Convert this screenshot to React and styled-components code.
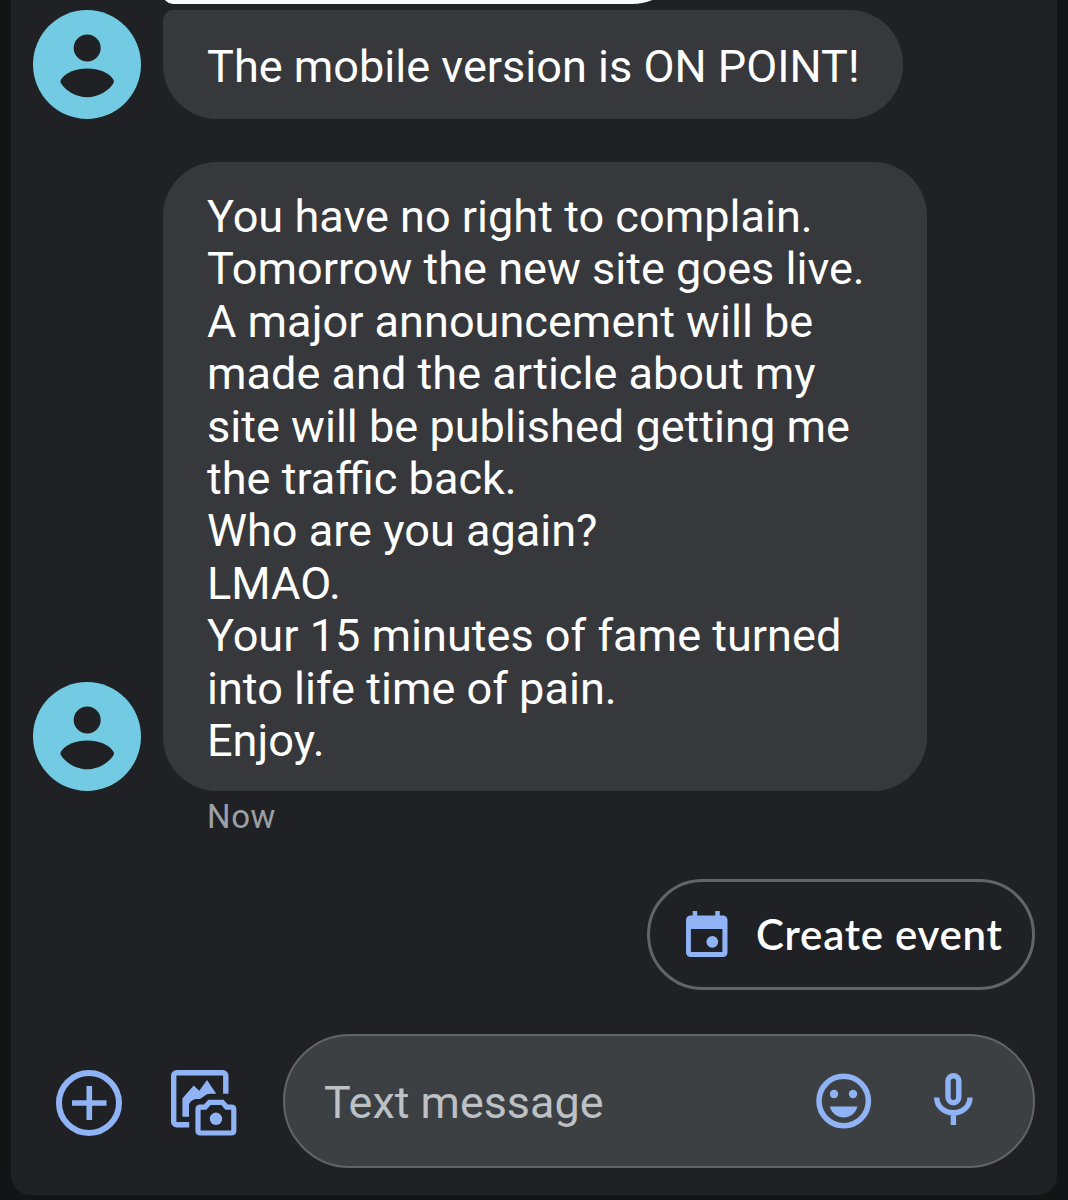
import React from 'react'
import styled, { createGlobalStyle } from 'styled-components'

const GlobalStyle = createGlobalStyle`
  * {
    box-sizing: border-box;
  }
  body {
    margin: 0;
    background: #131416;
    font-family: Roboto, 'Liberation Sans', sans-serif;
  }
`

const Screen = styled.div`
  height: 1200px;
  padding: 0 11px 5px;
  overflow: hidden;
  background: #131416;
`

const Panel = styled.main`
  display: flex;
  flex-direction: column;
  height: 1195px;
  padding: 0 22px;
  background: #202124;
  border-radius: 0 0 20px 20px;
`

const PreviousBubble = styled.div`
  flex: none;
  width: 523px;
  height: 4px;
  margin: 0 0 6px 130px;
  overflow: hidden;

  &::before {
    content: '';
    display: block;
    height: 109px;
    margin-top: -105px;
    background: #f8f9fa;
    border-radius: 54px 54px 54px 10px;
  }
`

const MessageRow = styled.div`
  display: flex;
  align-items: flex-end;
  gap: 22px;
  margin-bottom: ${(props) => props.$gap || 0}px;
`

const Bubble = styled.div`
  width: ${(props) => props.$width}px;
  height: ${(props) => props.$height}px;
  padding: ${(props) => props.$padTop}px 0 0 44px;
  background: #37383c;
  border-radius: ${(props) => (props.$grouped ? '10px 54px 54px 54px' : '54px')};
  color: #fff;
`

const Line = styled.p`
  margin: 0;
  font-size: 45.08px;
  line-height: 52.4px;
  white-space: nowrap;
`

const Timestamp = styled.div`
  height: 40px;
  margin: 5px 0 43px 174px;
  color: #9aa0a6;
  font-size: 33px;
  line-height: 41px;
  letter-spacing: 0.6px;
`

const SuggestionButton = styled.button`
  display: flex;
  align-items: center;
  align-self: flex-end;
  width: 388px;
  height: 111px;
  padding: 0 0 2px 36px;
  background: transparent;
  border: 3px solid #636466;
  border-radius: 56px;
  color: #fff;
`

const SuggestionLabel = styled.span`
  margin-left: 28px;
  font-family: Lato, sans-serif;
  font-size: 42px;
  font-weight: 600;
  line-height: 50px;
  letter-spacing: 0.75px;
  white-space: nowrap;
`

const ComposeBar = styled.div`
  display: flex;
  align-items: center;
  height: 134px;
  margin-top: 44px;
  padding-left: 23px;
`

const IconButton = styled.button`
  display: flex;
  flex: none;
  margin: ${(props) => props.$margin || 0};
  padding: 0;
  background: none;
  border: 0;
`

const MessageField = styled.div`
  display: flex;
  align-items: center;
  width: 752px;
  height: 134px;
  margin-left: 46px;
  padding-left: 39px;
  background: #3c4043;
  border: 2px solid #636466;
  border-radius: 67px;
`

const Placeholder = styled.span`
  flex: none;
  width: 492px;
  margin-top: 4px;
  color: #bdc1c6;
  font-size: 44.9px;
  line-height: 54px;
`

const Icon = styled.svg`
  display: block;
  flex: none;
`

const BLUE = '#8fb3f5'

const Avatar = () => (
  <Icon width="108" height="109" viewBox="0 0 108 109">
    <ellipse cx="54" cy="54.5" rx="54" ry="54.5" fill="#72cae3" />
    <circle cx="54.2" cy="38" r="13.5" fill="#202124" />
    <path
      d="M27.8 70C31.500 63 43 58.600 54.200 58.600S77 63 80.600 70Q81.300 71.500 80.600 73C76 80.500 65.500 87.300 54.200 87.300S32.400 80.500 27.800 73Q27.100 71.500 27.800 70Z"
      fill="#202124"
    />
  </Icon>
)

const CalendarIcon = () => (
  <Icon width="42" height="46" viewBox="0 0 42 46">
    <path
      fill={BLUE}
      fillRule="evenodd"
      d="M6.700 0h4.500v4.500h18.100V0h4.500v4.500h3.200A4.500 4.500 0 0 1 41.500 9v32.500A4.500 4.500 0 0 1 37 46H4.500A4.500 4.500 0 0 1 0 41.500V9A4.500 4.500 0 0 1 4.500 4.500H6.700ZM4.900 18v22.900h31.500V18Z"
    />
    <circle cx="26.300" cy="30.800" r="5.900" fill={BLUE} />
  </Icon>
)

const PlusIcon = () => (
  <Icon width="66" height="66" viewBox="0 0 66 66" fill="none" stroke={BLUE}>
    <circle cx="33" cy="33" r="30" strokeWidth="6" />
    <path d="M33.300 16v34M16 33h34.500" strokeWidth="5.600" />
  </Icon>
)

const GalleryIcon = () => (
  <Icon width="66" height="66" viewBox="0 0 66 66">
    <path
      d="M18.200 54.700H5.700a3 3 0 0 1-3-3V5.700a3 3 0 0 1 3-3H51.800a3 3 0 0 1 3 3V23.800"
      fill="none"
      stroke={BLUE}
      strokeWidth="5.400"
    />
    <path
      d="M11.400 46.700V28.500L22.700 15.500 28.300 20.700 36 10 45.200 23.800H39C34.500 23.800 32.500 27.500 28.800 29H25C20.500 29.800 18 32.500 18 36.500V46.700Z"
      fill={BLUE}
    />
    <path
      d="M29.500 37.100H34.200L38.500 32.300H51.300L55.600 37.100H60.300Q62.800 37.100 62.800 39.600V60.500Q62.800 63 60.300 63H29.500Q27 63 27 60.500V39.600Q27 37.100 29.500 37.100Z"
      fill="none"
      stroke={BLUE}
      strokeWidth="5.200"
    />
    <circle cx="45" cy="48.800" r="6.200" fill={BLUE} />
  </Icon>
)

const SmileIcon = () => (
  <Icon width="56" height="56" viewBox="0 0 56 56">
    <circle cx="27.700" cy="28" r="24.700" fill="none" stroke={BLUE} strokeWidth="5.600" />
    <circle cx="18" cy="21" r="4.200" fill={BLUE} />
    <circle cx="37" cy="21" r="4.200" fill={BLUE} />
    <path d="M13.800 33.500H41.500C39.500 40.500 34 44.500 27.700 44.500S15.800 40.500 13.800 33.500Z" fill={BLUE} />
  </Icon>
)

const MicIcon = () => (
  <Icon width="39" height="53" viewBox="0 0 39 53" fill="none" stroke={BLUE} strokeWidth="5.400">
    <rect x="14" y="2.700" width="10.800" height="27" rx="5.400" />
    <path d="M2.700 24.500C2.700 33.500 10.300 39.800 19.400 39.800S36 33.500 36 24.500M19.400 39.800V52" />
  </Icon>
)

const lines = [
  'You have no right to complain.',
  'Tomorrow the new site goes live.',
  'A major announcement will be',
  'made and the article about my',
  'site will be published getting me',
  'the traffic back.',
  'Who are you again?',
  'LMAO.',
  'Your 15 minutes of fame turned',
  'into life time of pain.',
  'Enjoy.',
]

const App = () => {
  return (
    <>
      <GlobalStyle />
      <Screen>
        <Panel>
          <PreviousBubble />
          <MessageRow $gap={43}>
            <Avatar />
            <Bubble $width={740} $height={109} $padTop={31} $grouped>
              <Line>The mobile version is ON POINT!</Line>
            </Bubble>
          </MessageRow>
          <MessageRow>
            <Avatar />
            <Bubble $width={764} $height={629} $padTop={29}>
              {lines.map((line) => (
                <Line key={line}>{line}</Line>
              ))}
            </Bubble>
          </MessageRow>
          <Timestamp>Now</Timestamp>
          <SuggestionButton>
            <CalendarIcon />
            <SuggestionLabel>Create event</SuggestionLabel>
          </SuggestionButton>
          <ComposeBar>
            <IconButton $margin="4px 0 0">
              <PlusIcon />
            </IconButton>
            <IconButton $margin="4px 0 0 49px">
              <GalleryIcon />
            </IconButton>
            <MessageField>
              <Placeholder>Text message</Placeholder>
              <IconButton>
                <SmileIcon />
              </IconButton>
              <IconButton $margin="0 0 4px 62px">
                <MicIcon />
              </IconButton>
            </MessageField>
          </ComposeBar>
        </Panel>
      </Screen>
    </>
  )
}

export default App
